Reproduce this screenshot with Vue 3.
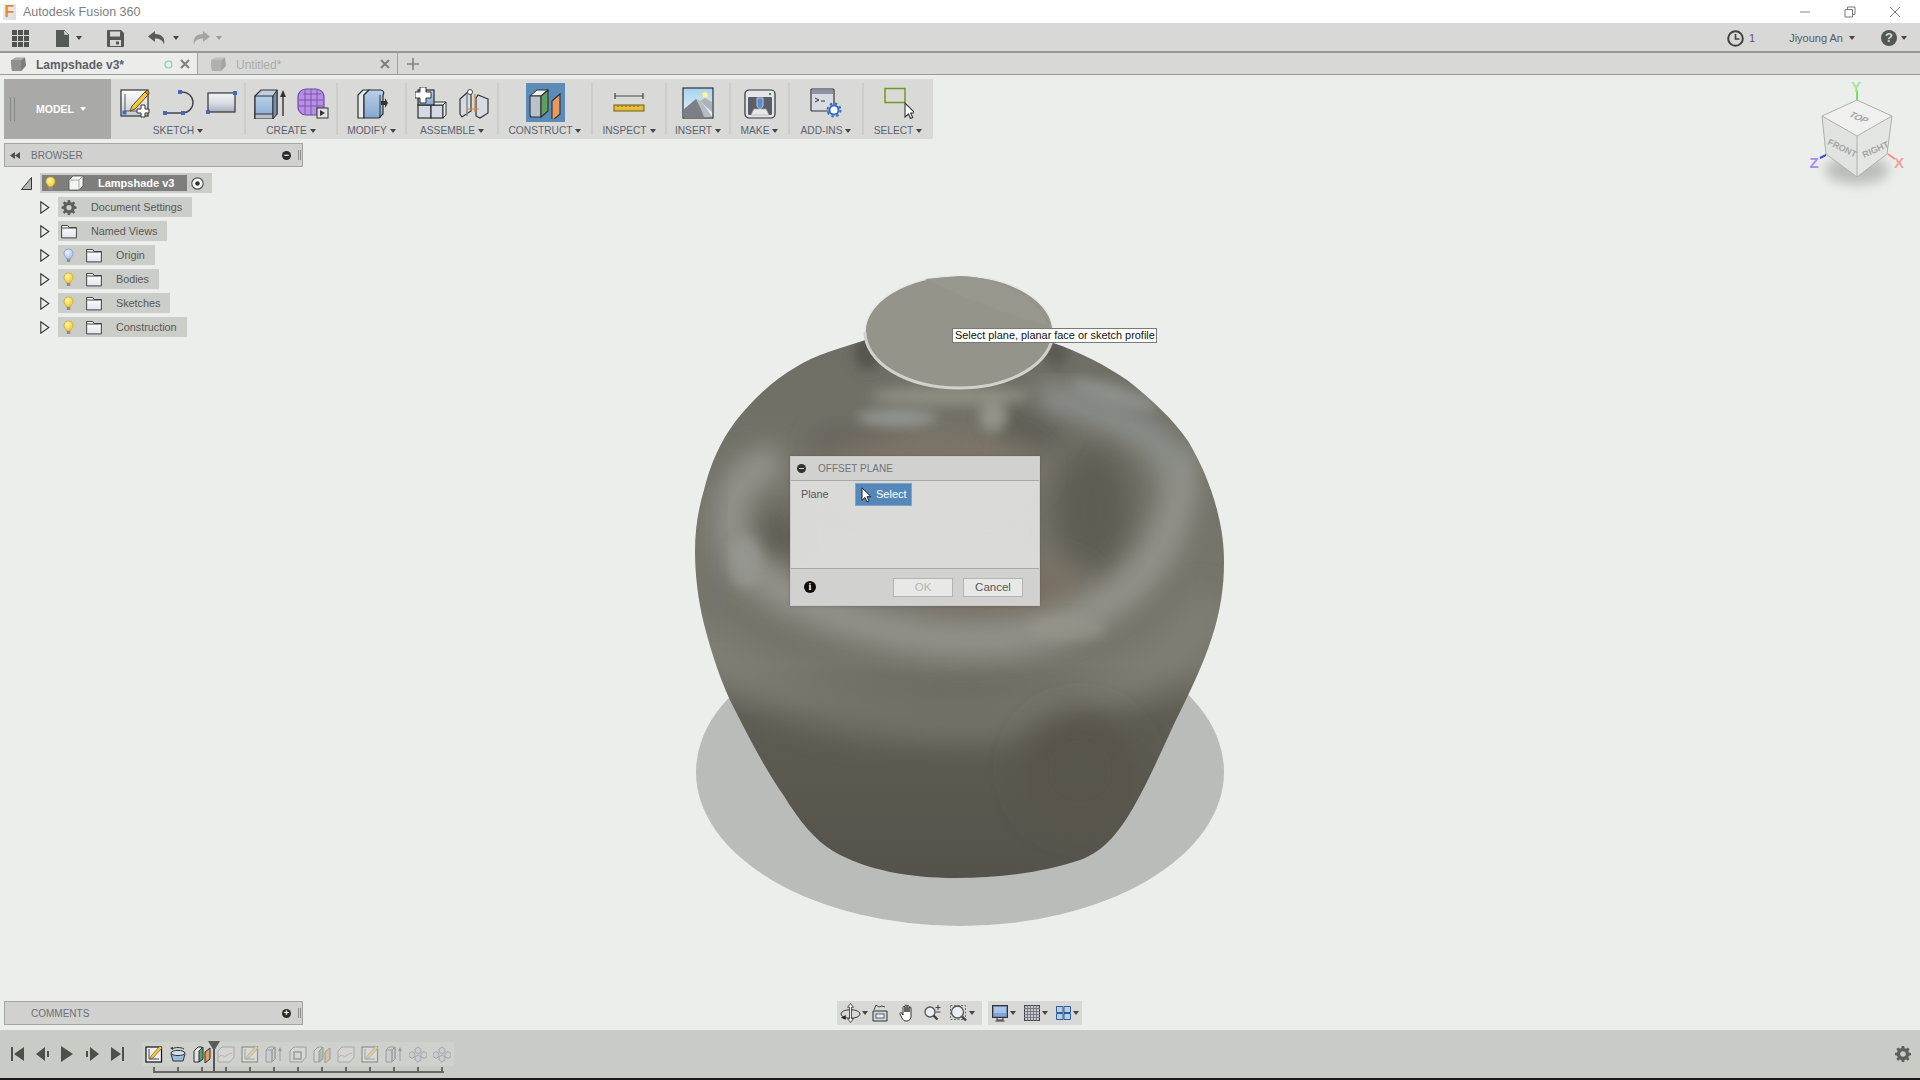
<script setup>
const ribbon = [
  { label: 'SKETCH', icons: ['i-sketch', 'i-arc', 'i-rect'] },
  { label: 'CREATE', icons: ['i-extrude', 'i-mesh'] },
  { label: 'MODIFY', icons: ['i-press'] },
  { label: 'ASSEMBLE', icons: ['i-comp', 'i-joint'] },
  { label: 'CONSTRUCT', icons: ['i-plane'], active: true },
  { label: 'INSPECT', icons: ['i-ruler'] },
  { label: 'INSERT', icons: ['i-picture'] },
  { label: 'MAKE', icons: ['i-printer'] },
  { label: 'ADD-INS', icons: ['i-addins'] },
  { label: 'SELECT', icons: ['i-select'] }
]
const rows = [
  { label: 'Document Settings', icon: 'i-gear' },
  { label: 'Named Views', icon: 'i-folder' },
  { label: 'Origin', bulb: 'i-bulb-blue', icon: 'i-folder' },
  { label: 'Bodies', bulb: 'i-bulb', icon: 'i-folder' },
  { label: 'Sketches', bulb: 'i-bulb', icon: 'i-folder' },
  { label: 'Construction', bulb: 'i-bulb', icon: 'i-folder' }
]
const timeline = [
  { icon: 't-sketch' }, { icon: 't-revolve' }, { icon: 't-plane' },
  { icon: 't-surface', faded: true }, { icon: 't-sketch', faded: true }, { icon: 't-extrude', faded: true },
  { icon: 't-shell', faded: true }, { icon: 't-plane', faded: true }, { icon: 't-surface', faded: true },
  { icon: 't-sketch', faded: true }, { icon: 't-extrude', faded: true }, { icon: 't-pattern', faded: true },
  { icon: 't-pattern', faded: true }
]
</script>

<template>
  <div class="app">
    <svg class="defs" width="0" height="0" aria-hidden="true">
      <defs>
        <linearGradient id="gPage" x1="0" y1="0" x2="0" y2="1"><stop offset="0" stop-color="#ffffff" /><stop offset="1" stop-color="#c4cad4" /></linearGradient>
        <linearGradient id="gBar" x1="0" y1="0" x2="0" y2="1"><stop offset="0" stop-color="#f4f5f7" /><stop offset=".55" stop-color="#d8dbe2" /><stop offset="1" stop-color="#a8adba" /></linearGradient>
        <linearGradient id="gBlue" x1="0" y1="0" x2="0" y2="1"><stop offset="0" stop-color="#b9d0e8" /><stop offset="1" stop-color="#86a8cf" /></linearGradient>
        <linearGradient id="gSky" x1="0" y1="0" x2="0" y2="1"><stop offset="0" stop-color="#a7d3ef" /><stop offset="1" stop-color="#e8f3f8" /></linearGradient>
        <radialGradient id="gBulb" cx=".4" cy=".35" r=".7"><stop offset="0" stop-color="#fff6a8" /><stop offset="1" stop-color="#f2c92a" /></radialGradient>
        <radialGradient id="gBulbB" cx=".4" cy=".35" r=".7"><stop offset="0" stop-color="#eef2fb" /><stop offset="1" stop-color="#a9bfe6" /></radialGradient>
        <linearGradient id="gFolder" x1="0" y1="0" x2="0" y2="1"><stop offset="0" stop-color="#ffffff" /><stop offset="1" stop-color="#dfe6ee" /></linearGradient>
        <symbol id="i-bulb" viewBox="0 0 12 16"><path d="M6 .8a5 5 0 0 1 3 9c-.6.5-.8 1-.8 1.7H3.800c0-.7-.2-1.200-.8-1.700a5 5 0 0 1 3-9z" fill="url(#gBulb)" stroke="#c9a227" stroke-width=".7" /><rect x="4" y="11.800" width="4" height="3.400" rx="1" fill="#8d8f96" /></symbol>
        <symbol id="i-bulb-blue" viewBox="0 0 12 16"><path d="M6 .8a5 5 0 0 1 3 9c-.6.5-.8 1-.8 1.700H3.800c0-.7-.2-1.200-.8-1.700a5 5 0 0 1 3-9z" fill="url(#gBulbB)" stroke="#7a93c6" stroke-width=".7" /><rect x="4" y="11.800" width="4" height="3.400" rx="1" fill="#8d8f96" /></symbol>
        <symbol id="i-folder" viewBox="0 0 16 14"><path d="M.6 1h6l1.500 2h7.300v10.400H.6z" fill="url(#gFolder)" stroke="#444" stroke-width="1" /><path d="M.6 3.500h14.800" stroke="#444" stroke-width="1" /></symbol>
        <symbol id="i-gear" viewBox="0 0 16 16"><path d="M6.800 0h2.400l.4 2.200 1.500.6 1.800-1.300 1.700 1.700-1.300 1.800.6 1.500 2.100.4v2.400l-2.100.4-.6 1.500 1.300 1.800-1.700 1.700-1.800-1.300-1.500.6-.4 2.100H6.800l-.4-2.100-1.500-.6-1.800 1.300-1.700-1.700 1.300-1.800-.6-1.500L0 9.200V6.800l2.100-.4.6-1.500-1.300-1.800 1.700-1.700 1.800 1.300 1.500-.6zM8 5.200a2.800 2.800 0 1 0 0 5.600 2.800 2.800 0 0 0 0-5.600z" fill="#5d5f5f" fill-rule="evenodd" /></symbol>
        <symbol id="i-cube" viewBox="0 0 18 16"><path d="M1 3.500L6 .8h10l1 8.500-5 5.700H2z" fill="#7a7b7a" /><path d="M1 3.500h11V15H2z" fill="#8f908f" /><path d="M1 3.500L6 .8h10l-4 2.700z" fill="#a9aaa9" /></symbol>
      </defs>
    </svg>

    <header class="titlebar">
      <span class="logo">F</span>
      <span class="title">Autodesk Fusion 360</span>
      <div class="winctl">
        <svg width="12" height="12" viewBox="0 0 12 12"><path d="M1 6h10" stroke="#888" stroke-width="1" /></svg>
        <svg width="12" height="12" viewBox="0 0 12 12"><path d="M1 3.500h7.500V11H1zM3.500 3.500V1H11v7.500H8.500" fill="none" stroke="#777" stroke-width="1" /></svg>
        <svg width="12" height="12" viewBox="0 0 12 12"><path d="M1 1l10 10M11 1L1 11" stroke="#777" stroke-width="1" /></svg>
      </div>
    </header>

    <div class="menubar">
      <svg class="m-grid" width="17" height="17" viewBox="0 0 17 17"><path d="M0 0h5v5H0zM6 0h5v5H6zM12 0h5v5h-5zM0 6h5v5H0zM6 6h5v5H6zM12 6h5v5h-5zM0 12h5v5H0zM6 12h5v5H6zM12 12h5v5h-5z" fill="#505250" /></svg>
      <svg class="m-doc" width="14" height="17" viewBox="0 0 14 17"><path d="M0 0h8l5 5v12H0z" fill="#575957" /><path d="M8 0l5 5H8z" fill="#d8d9d7" stroke="#575957" stroke-width=".5" /></svg>
      <i class="caret m-c1"></i>
      <svg class="m-save" width="17" height="17" viewBox="0 0 17 17"><path d="M0 1a1 1 0 0 1 1-1h13l3 3v13a1 1 0 0 1-1 1H1a1 1 0 0 1-1-1z" fill="#565856" /><rect x="3" y="1.500" width="10" height="5" fill="#d8d9d7" /><rect x="3" y="10" width="11" height="6" fill="#d8d9d7" /><rect x="9" y="11.500" width="3" height="3" fill="#565856" /></svg>
      <svg class="m-undo" width="18" height="14" viewBox="0 0 18 14"><path d="M7 0L0 5.500 7 11V7.500c4.500 0 7.500 1.200 9 6 1.500-7-2.500-10.500-9-10.500z" fill="#595b59" /></svg>
      <i class="caret m-c2"></i>
      <svg class="m-redo" width="18" height="14" viewBox="0 0 18 14"><path d="M11 0l7 5.500-7 5.500V7.500c-4.500 0-7.500 1.200-9 6C.5 6.500 4.500 3 11 3z" fill="#a2a5a3" /></svg>
      <i class="caret light m-c3"></i>
      <div class="m-right">
        <svg class="m-clock" width="17" height="17" viewBox="0 0 17 17"><circle cx="8.500" cy="8.500" r="7.300" fill="none" stroke="#404240" stroke-width="2" /><path d="M8.500 4v5h4" fill="none" stroke="#404240" stroke-width="1.600" /></svg>
        <span class="m-count">1</span>
        <span class="m-user">Jiyoung An</span>
        <i class="caret m-c4"></i>
        <span class="m-help">?</span>
        <i class="caret m-c5"></i>
      </div>
    </div>

    <div class="tabs">
      <div class="tab active">
        <svg class="t-cube" width="17" height="15"><use href="#i-cube" /></svg>
        <span class="t-name">Lampshade v3*</span>
        <svg class="t-ring" width="9" height="9" viewBox="0 0 9 9"><circle cx="4.500" cy="4.500" r="3.500" fill="none" stroke="#7fd1bb" stroke-width="1.200" /></svg>
        <svg class="t-x" width="10" height="10" viewBox="0 0 10 10"><path d="M1 1l8 8M9 1L1 9" stroke="#818381" stroke-width="2.200" /></svg>
      </div>
      <div class="tab">
        <svg class="t-cube dim" width="17" height="15"><use href="#i-cube" /></svg>
        <span class="t-name dimtext">Untitled*</span>
        <svg class="t-x" width="10" height="10" viewBox="0 0 10 10"><path d="M1 1l8 8M9 1L1 9" stroke="#818381" stroke-width="2.200" /></svg>
      </div>
      <svg class="t-plus" width="12" height="12" viewBox="0 0 12 12"><path d="M6 0v12M0 6h12" stroke="#808280" stroke-width="1.600" /></svg>
    </div>

    <main class="workspace">
      <svg class="scene" width="1920" height="955" viewBox="0 75 1920 955">
        <defs>
          <linearGradient id="vBody" gradientUnits="userSpaceOnUse" x1="0" y1="340" x2="0" y2="878">
            <stop offset="0" stop-color="#6f6e65" />
            <stop offset=".42" stop-color="#76756b" />
            <stop offset=".6" stop-color="#76756b" />
            <stop offset=".7" stop-color="#5f5d53" />
            <stop offset="1" stop-color="#54524a" />
          </linearGradient>
          <clipPath id="vClip"><path d="M866 340C840 348 815 355 796 367C770 382 750 403 735 422C720 442 710 465 704 490C698 510 695 530 695 551C695 575 698 600 704 624C712 655 722 685 735 710C750 740 767 772 784 796C800 822 815 840 833 851C865 870 910 878 955 878C1000 878 1045 872 1080 860C1105 851 1120 830 1133 808C1148 782 1162 750 1175 722C1190 692 1203 665 1212 637C1220 612 1224 588 1224 563C1224 545 1222 530 1218 514C1212 488 1201 463 1188 441C1172 418 1150 398 1127 380C1105 365 1080 352 1053 343L1050 320L870 320Z" /></clipPath>
          <filter id="b4" x="-50%" y="-80%" width="200%" height="260%"><feGaussianBlur stdDeviation="6" /></filter>
          <filter id="b9" x="-30%" y="-30%" width="160%" height="160%"><feGaussianBlur stdDeviation="12" /></filter>
          <filter id="b14" x="-40%" y="-40%" width="180%" height="180%"><feGaussianBlur stdDeviation="15" /></filter>
        </defs>
        <ellipse cx="960" cy="772" rx="264" ry="154" fill="#babcb9" />
        <g clip-path="url(#vClip)">
          <rect x="680" y="320" width="560" height="570" fill="url(#vBody)" />
          <path d="M690 630C735 690 850 720 958 720C1070 720 1170 680 1215 600" fill="none" stroke="#8a897f" stroke-width="46" opacity=".5" filter="url(#b14)" />
          <ellipse cx="1092" cy="510" rx="40" ry="66" fill="#5e5d53" filter="url(#b14)" />
          <ellipse cx="779" cy="537" rx="24" ry="26" fill="#5f5e55" filter="url(#b9)" />
          <ellipse cx="860" cy="442" rx="50" ry="16" fill="#63615a" filter="url(#b9)" />
          <ellipse cx="1030" cy="428" rx="36" ry="22" fill="#5e5d54" filter="url(#b9)" />
          <ellipse cx="930" cy="470" rx="110" ry="36" fill="#7f7568" filter="url(#b14)" />
          <ellipse cx="1000" cy="590" rx="90" ry="30" fill="#7a7063" filter="url(#b14)" />
          <path d="M1178 452C1188 500 1166 556 1125 590C1085 622 1030 640 974 640C900 640 820 615 772 585C735 560 722 530 732 500C742 478 752 466 780 462" fill="none" stroke="#93938b" stroke-width="34" filter="url(#b9)" />
          <ellipse cx="1066" cy="628" rx="40" ry="12" fill="#97948a" opacity=".7" filter="url(#b4)" />
          <ellipse cx="745" cy="562" rx="16" ry="26" fill="#9a9a94" opacity=".7" filter="url(#b4)" />
          <path d="M1040 396C1090 404 1150 422 1180 470" fill="none" stroke="#8c8f8b" stroke-width="30" filter="url(#b9)" />
          <ellipse cx="1115" cy="395" rx="46" ry="10" fill="#929591" opacity=".8" transform="rotate(16 1115 395)" filter="url(#b4)" />
          <ellipse cx="950" cy="396" rx="80" ry="10" fill="#8e8d82" filter="url(#b4)" />
          <ellipse cx="897" cy="418" rx="40" ry="9" fill="#9ba09c" opacity=".75" filter="url(#b4)" />
          <ellipse cx="993" cy="416" rx="14" ry="16" fill="#9e9d92" opacity=".8" filter="url(#b4)" />
          <path d="M722 480C708 520 708 580 724 625" fill="none" stroke="#74777a" stroke-width="10" opacity=".55" filter="url(#b9)" />
          <ellipse cx="868" cy="352" rx="14" ry="18" fill="#55554e" filter="url(#b4)" />
          <ellipse cx="1056" cy="352" rx="12" ry="16" fill="#5b5a52" filter="url(#b4)" />
          <ellipse cx="1080" cy="770" rx="60" ry="60" fill="#59544b" filter="url(#b14)" />
        </g>
        <ellipse cx="959" cy="332" rx="94" ry="56" fill="#94948b" stroke="#e6e7e3" stroke-width="1.500" />
        <path d="M865 332A94 56 0 0 0 1053 332" fill="none" stroke="#d1d2cd" stroke-width="3" />
        <path d="M925 279C970 300 1015 318 1048 325C1040 300 1000 276 959 276Z" fill="#98978d" />
      </svg>

      <svg class="cube" width="100" height="120" viewBox="1810 80 100 120">
        <defs><filter id="cb" x="-40%" y="-60%" width="180%" height="220%"><feGaussianBlur stdDeviation="6" /></filter></defs>
        <ellipse cx="1857" cy="172" rx="32" ry="14" fill="#bbbdba" filter="url(#cb)" />
        <path d="M1857 102L1892 118L1887 156L1857 179L1826 156L1822 118Z" fill="#eceeeb" />
        <path d="M1857 138L1892 118L1887 156L1857 179Z" fill="#e4e6e3" />
        <path d="M1822 118L1857 138V179L1826 156Z" fill="#e1e3e0" />
        <path d="M1857 102L1892 118L1857 138L1822 118Z" fill="#f0f1ef" stroke="#aeb0ad" />
        <path d="M1857 138V179M1822 118L1826 156L1857 179L1887 156L1892 118" fill="none" stroke="#aeb0ad" />
        <text class="cube-txt" transform="translate(1848 118) rotate(24) skewX(-24)">TOP</text>
        <text class="cube-txt" transform="translate(1827 146) rotate(26)">FRONT</text>
        <text class="cube-txt" transform="translate(1864 160) rotate(-24)">RIGHT</text>
        <path d="M1857 92V102" stroke="#6fe26f" stroke-width="2" />
        <path d="M1820 160L1826 157" stroke="#4a47d8" stroke-width="2" />
        <path d="M1888 156L1895 161" stroke="#f09090" stroke-width="2" />
        <text class="axis ay" x="1856" y="94">Y</text>
        <text class="axis az" x="1814" y="170">Z</text>
        <text class="axis ax" x="1899" y="170">X</text>
      </svg>

      <div class="tooltip">Select plane, planar face or sketch profile</div>

      <section class="dialog">
        <div class="d-head">
          <span class="minus"></span>
          <span class="d-title">OFFSET PLANE</span>
        </div>
        <div class="d-body">
          <span class="d-label">Plane</span>
          <span class="d-select">
            <svg width="11" height="16" viewBox="0 0 11 16"><path d="M1 .8v12.500l3-2.800 2 4.400 2-1-2-4.200h4z" fill="#fff" stroke="#222" stroke-width="1" /></svg>
            Select
          </span>
        </div>
        <div class="d-foot">
          <span class="info">i</span>
          <button class="btn off">OK</button>
          <button class="btn">Cancel</button>
        </div>
      </section>

      <div class="stack">
        <div class="ribbon">
          <div class="model"><span class="grip"></span><span class="m-label">MODEL</span><i class="caret white"></i></div>
          <div v-for="g in ribbon" :key="g.label" class="group">
            <div class="g-icons" :class="{ hi: g.active }">
              <svg v-for="ic in g.icons" :key="ic" class="ric" width="32" height="32" viewBox="0 0 32 32">
                <template v-if="ic === 'i-sketch'">
                  <rect x="2" y="3" width="27" height="26" fill="url(#gPage)" stroke="#333" stroke-width="1.200" />
                  <path d="M6 7v17h17" fill="none" stroke="#555" stroke-width="1" />
                  <rect x="3.500" y="23.500" width="4" height="4" fill="#3a6cc4" />
                  <path d="M13 19l-2 5 5-2L29 8l-3-3z" fill="#f5c93a" stroke="#5a4a20" stroke-width="1" />
                  <path d="M26 5l3 3 1.500-2-2.500-3z" fill="#e07b3a" stroke="#5a4a20" stroke-width=".8" />
                  <path d="M22 18h4v4h4v4h-4v4h-4v-4h-4v-4h4z" fill="#fff" stroke="#333" stroke-width="1" />
                </template>
                <template v-else-if="ic === 'i-arc'">
                  <path d="M3 26h18M18 5h2a10.500 10.500 0 0 1 1 21" fill="none" stroke="#444" stroke-width="1.400" />
                  <rect x="1" y="24" width="4" height="4" fill="#3a6cc4" /><rect x="19" y="24" width="4" height="4" fill="#3a6cc4" /><rect x="16" y="3" width="4" height="4" fill="#3a6cc4" />
                </template>
                <template v-else-if="ic === 'i-rect'">
                  <rect x="3" y="6" width="27" height="19" fill="url(#gBar)" stroke="#333" stroke-width="1.200" />
                  <rect x="28" y="4" width="4" height="4" fill="#3a6cc4" /><rect x="1" y="23" width="4" height="4" fill="#3a6cc4" />
                </template>
                <template v-else-if="ic === 'i-extrude'">
                  <path d="M1 9l6-6h16v24l-6 5H1z" fill="#c3cede" stroke="#2f3136" stroke-width="1.200" />
                  <path d="M1 9h18v23H1z" fill="url(#gBlue)" stroke="#2f3136" stroke-width="1.200" />
                  <path d="M1 27h18v5H1z" fill="#b9bfc8" stroke="#2f3136" stroke-width="1" />
                  <path d="M19 9l4-6v24l-4 5z" fill="#7d90ab" stroke="#2f3136" stroke-width="1" />
                  <path d="M29 29V8" stroke="#333" stroke-width="1.400" /><path d="M29 3l-3 7h6z" fill="#333" />
                </template>
                <template v-else-if="ic === 'i-mesh'">
                  <rect x="1" y="2" width="26" height="26" rx="8" fill="#b98fe6" stroke="#6b4aa0" stroke-width="1.200" />
                  <path d="M6 7h18M2 13h24M2 19h24M8 3v24M14 2v26M20 3v24" stroke="#7a55b0" stroke-width="1" fill="none" />
                  <rect x="20" y="21" width="11" height="10" fill="#dfe1e3" stroke="#333" stroke-width="1" />
                  <path d="M23 23l5 3-5 3z" fill="#333" />
                </template>
                <template v-else-if="ic === 'i-press'">
                  <path d="M2 8l5-5h6l-5 5v23H2z" fill="#e8eaee" stroke="#2c2e33" stroke-width="1.200" />
                  <path d="M8 8l5-5h12a3 3 0 0 1 2 5v19l-4 4H8z" fill="url(#gBlue)" stroke="#2c2e33" stroke-width="1.200" />
                  <path d="M24 8v23" stroke="#2c2e33" stroke-width="1" />
                  <path d="M25 14h4v-3l3 5-3 5v-3h-4z" fill="#333" />
                </template>
                <template v-else-if="ic === 'i-comp'">
                  <rect x="3" y="18" width="13" height="13" fill="#d6dbe3" stroke="#2c2e33" stroke-width="1.200" />
                  <rect x="16" y="18" width="12" height="13" fill="#d6dbe3" stroke="#2c2e33" stroke-width="1.200" />
                  <path d="M28 18l3-3v13l-3 3zM16 18l3-3h12l-3 3z" fill="#eceef1" stroke="#2c2e33" stroke-width="1" />
                  <rect x="3" y="3" width="16" height="15" fill="url(#gBlue)" stroke="#2c2e33" stroke-width="1.200" />
                  <path d="M5 0h6v5h5v6h-5v5H5v-5H0V5h5z" fill="#fff" stroke="#333" stroke-width="1" />
                </template>
                <template v-else-if="ic === 'i-joint'">
                  <path d="M2 12l9-8 2 4v16l-9 6-2-3z" fill="#d8dbe1" stroke="#33353a" stroke-width="1.200" />
                  <path d="M30 12l-10-4-2 3v18l4 2 8-5z" fill="#d8dbe1" stroke="#33353a" stroke-width="1.200" />
                  <path d="M9 7v22" stroke="#888" stroke-width="1.500" />
                  <circle cx="12" cy="5" r="2.500" fill="#fff" stroke="#444" />
                  <path d="M17 7v18" stroke="#d38440" stroke-width="1.400" /><path d="M9 22h12" stroke="#d38440" stroke-width="1" />
                </template>
                <template v-else-if="ic === 'i-plane'">
                  <path d="M1 9l7-6h11l-7 6z" fill="#f2f3f5" stroke="#2c2e33" stroke-width="1" />
                  <path d="M1 9h11v21H3a2 2 0 0 1-2-2z" fill="#bcc2cc" stroke="#2c2e33" stroke-width="1.100" />
                  <path d="M12 9l7-6v21l-7 6z" fill="#5fa05a" stroke="#2c2e33" stroke-width="1.100" />
                  <path d="M23 14l8-7v20l-8 7z" fill="#e89a62" stroke="#2c2e33" stroke-width="1.100" />
                </template>
                <template v-else-if="ic === 'i-ruler'">
                  <path d="M2 9h28M2 6v6M30 6v6" stroke="#454545" stroke-width="1.200" fill="none" />
                  <rect x="1" y="18" width="30" height="6" fill="#e8bd37" stroke="#6c5a1d" stroke-width="1" />
                  <path d="M5 18v2M9 18v2M13 18v2M17 18v2M21 18v2M25 18v2" stroke="#6c5a1d" stroke-width="1" />
                </template>
                <template v-else-if="ic === 'i-picture'">
                  <rect x="1" y="1" width="30" height="30" fill="url(#gSky)" stroke="#2f3136" stroke-width="1.200" />
                  <circle cx="23" cy="8" r="3" fill="#fff3b0" stroke="#f4df8d" />
                  <path d="M2 30V22l12-10c6 3 10 10 16 18z" fill="#7c7f87" />
                  <path d="M18 14l5-3 7 4v10z" fill="#aeb2b7" /><path d="M14 12c7 3 10 10 16 18h-8c-2-6-5-12-8-18z" fill="#b9bcc1" />
                </template>
                <template v-else-if="ic === 'i-printer'">
                  <rect x="1" y="3" width="30" height="28" rx="4" fill="#e3e5e8" stroke="#2f3136" stroke-width="1.200" />
                  <rect x="4" y="10" width="24" height="18" rx="1" fill="#5a5e67" />
                  <rect x="25" y="6" width="2" height="2" fill="#2a9a3a" />
                  <path d="M13 11h6v8l-3 4-3-4z" fill="#5b88d0" stroke="#dfe1e4" stroke-width=".8" />
                  <path d="M7 28l3-6h12l3 6z" fill="#e6e7e8" stroke="#aaa" stroke-width=".6" />
                </template>
                <template v-else-if="ic === 'i-addins'">
                  <rect x="1" y="2" width="23" height="22" rx="1" fill="#d9dbe3" stroke="#33353a" stroke-width="1.200" />
                  <rect x="2" y="3" width="21" height="4" fill="#8f93a1" />
                  <path d="M5 11l4 2-4 2M11 14h4" stroke="#333" fill="none" />
                  <circle cx="24" cy="23" r="4.500" fill="#fff" stroke="#3a6cc4" stroke-width="2" />
                  <circle cx="24" cy="23" r="6.500" fill="none" stroke="#3a6cc4" stroke-width="2" stroke-dasharray="2.500 2.600" />
                </template>
                <template v-else-if="ic === 'i-select'">
                  <rect x="3" y="1.500" width="20" height="14" fill="none" stroke="#6c9b1f" stroke-width="1.500" />
                  <path d="M23 16v14l3.500-3 2 4.500 2.200-1-2-4.500H33z" fill="#fff" stroke="#333" stroke-width="1.100" />
                </template>
              </svg>
            </div>
            <div class="g-label">{{ g.label }}<i class="caret"></i></div>
          </div>
        </div>

        <div class="panel browser">
          <svg class="rewind" width="10" height="7" viewBox="0 0 10 7"><path d="M5 0v7L0 3.500zM10 0v7L5 3.500z" fill="#4c4e4c" /></svg>
          <span class="p-title">BROWSER</span>
          <span class="round">−</span>
          <span class="p-grip"></span>
        </div>

        <div class="tree">
          <div class="row root">
            <svg class="arrow" width="11" height="13" viewBox="0 0 11 13"><path d="M10.500 .5v12H.5z" fill="#b5b7b4" stroke="#333" /></svg>
            <div class="chip rootchip">
              <div class="rootdark">
                <svg class="rb" width="11" height="15"><use href="#i-bulb" /></svg>
                <svg class="rc" width="16" height="16" viewBox="0 0 16 16"><path d="M1 5l4-4h10v10l-4 4H1z" fill="#f3f4f4" stroke="#555" stroke-width=".8" /><path d="M1 5h10l4-4M11 5v10" fill="none" stroke="#888" stroke-width=".7" /></svg>
                <span class="rname">Lampshade v3</span>
              </div>
              <svg class="radio" width="13" height="13" viewBox="0 0 13 13"><circle cx="6.500" cy="6.500" r="5.700" fill="#fff" stroke="#555" stroke-width="1.200" /><circle cx="6.500" cy="6.500" r="2.300" fill="#333" /></svg>
            </div>
          </div>
          <div v-for="r in rows" :key="r.label" class="row">
            <svg class="arrow small" width="10" height="13" viewBox="0 0 10 13"><path d="M.8 .8l8 5.700-8 5.700z" fill="#eceeec" stroke="#333" stroke-width="1.100" /></svg>
            <div class="chip">
              <span v-if="r.bulb" class="slot"><svg class="bulb" width="11" height="15"><use :href="'#' + r.bulb" /></svg></span>
              <span class="slot"><svg width="16" height="15"><use :href="'#' + r.icon" /></svg></span>
              <span class="c-text">{{ r.label }}</span>
            </div>
          </div>
        </div>

        <div class="bottom">
          <div class="panel comments">
            <span class="p-title">COMMENTS</span>
            <span class="round">+</span>
            <span class="p-grip"></span>
          </div>
          <div class="nav">
            <svg class="n1" width="21" height="20" viewBox="0 0 22 20"><ellipse cx="11" cy="11" rx="10" ry="4.500" fill="none" stroke="#333" stroke-width="1" /><path d="M11 0l-3 4h2v12H8l3 4 3-4h-2V4h2z" fill="#fff" stroke="#333" stroke-width=".9" /><path d="M1 15l5-3v5z" fill="#222" /></svg>
            <i class="caret c-n1"></i>
            <svg class="n2" width="16" height="18" viewBox="0 0 16 18"><path d="M1 7h14v10H1z" fill="#cfd3d9" stroke="#333" /><rect x="4" y="10" width="8" height="4" fill="#eceef0" stroke="#444" stroke-width=".8" /><path d="M2 6l2-5 3 2 3-1 3 1" fill="none" stroke="#444" /></svg>
            <svg class="n3" width="16" height="18" viewBox="0 0 16 18"><path d="M4 11V3.500a1 1 0 0 1 2 0V8V2a1 1 0 0 1 2 0v6V2.500a1 1 0 0 1 2 0V8V4a1 1 0 0 1 2 0v8c0 3-1.500 5-4.500 5-2.500 0-3.500-1-4.500-3L1 10c-.5-1 .8-2 1.800-1z" fill="#fff" stroke="#333" stroke-width="1" /></svg>
            <svg class="n4" width="17" height="18" viewBox="0 0 17 18"><circle cx="6" cy="8" r="5" fill="#e8eef2" stroke="#555" stroke-width="1.300" /><path d="M9.500 11.500l4 4" stroke="#444" stroke-width="2.400" /><path d="M14 1v5M11.500 3.500h5M11.500 8h5" stroke="#444" stroke-width="1" /></svg>
            <svg class="n5" width="17" height="18" viewBox="0 0 17 18"><rect x=".5" y="1.500" width="15" height="14" fill="none" stroke="#555" stroke-dasharray="2 1.500" stroke-width=".8" /><circle cx="7.500" cy="8" r="6" fill="#e8eef2" stroke="#555" stroke-width="1.300" /><path d="M12 12.500l4 4" stroke="#444" stroke-width="2.400" /></svg>
            <i class="caret"></i>
          </div>
          <div class="nav second">
            <svg class="n6" width="16" height="17" viewBox="0 0 16 17"><rect x=".6" y=".6" width="14.800" height="11.800" fill="#7fa4d6" stroke="#333" stroke-width="1.200" /><rect x="2" y="2" width="12" height="6" fill="#a9c5e6" /><path d="M5 13v2h6v-2M3.500 16h9" stroke="#333" stroke-width="1" fill="none" /></svg>
            <i class="caret"></i>
            <svg class="n7" width="16" height="16" viewBox="0 0 16 16"><rect x=".5" y=".5" width="15" height="15" fill="#c4c5cc" stroke="#444" /><path d="M3.500 0v16M6.500 0v16M9.500 0v16M12.500 0v16M0 3.500h16M0 6.500h16M0 9.500h16M0 12.500h16" stroke="#6e6f78" stroke-width=".8" /></svg>
            <i class="caret"></i>
            <svg class="n8" width="15" height="14" viewBox="0 0 15 14"><path d="M.5.5h6.500v6H.5zM8 .5h6.500v6H8zM.5 7.500h6.500v6H.5zM8 7.500h6.500v6H8z" fill="#b9cfe6" stroke="#2f5c96" stroke-width="1" /></svg>
            <i class="caret"></i>
          </div>
        </div>
      </div>
    </main>

    <footer class="timebar">
      <div class="transport">
        <svg width="13" height="14" viewBox="0 0 13 14"><path d="M0 0h2v14H0zM13 0v14L3 7z" fill="#4d4f4d" /></svg>
        <svg width="13" height="14" viewBox="0 0 13 14"><path d="M9 0v14L0 7zM11 4h2v6h-2z" fill="#4d4f4d" /></svg>
        <svg width="13" height="16" viewBox="0 0 13 16"><path d="M0 0l12 8-12 8z" fill="#4d4f4d" /></svg>
        <svg width="13" height="14" viewBox="0 0 13 14"><path d="M4 0v14l9-7zM0 4h2v6H0z" fill="#4d4f4d" /></svg>
        <svg width="13" height="14" viewBox="0 0 13 14"><path d="M11 0h2v14h-2zM0 0v14l10-7z" fill="#4d4f4d" /></svg>
      </div>
      <div class="tl">
        <div v-for="(t, i) in timeline" :key="i" class="tl-item" :class="{ faded: t.faded }">
          <svg width="18" height="17" viewBox="0 0 18 17">
            <template v-if="t.icon === 't-sketch'">
              <rect x="1" y="1" width="15.500" height="15" fill="#eef0f3" stroke="#111" stroke-width="1.200" />
              <path d="M4 3v10h10" fill="none" stroke="#444" /><path d="M6 10l-1 3 3-1 9-10-2-2z" fill="#f3c736" stroke="#5a4a20" stroke-width=".6" />
            </template>
            <template v-else-if="t.icon === 't-revolve'">
              <path d="M2 8c0-2 14-2 14 0l-2 7H4z" fill="#9dbde0" stroke="#333" /><ellipse cx="9" cy="7" rx="7" ry="2.600" fill="#cfe0f0" stroke="#333" />
              <path d="M3 3c3-2 9-2 12 0" fill="none" stroke="#333" /><path d="M1 2l3-1v3z" fill="#333" />
            </template>
            <template v-else-if="t.icon === 't-plane'">
              <path d="M1 5l4-4h4v12l-3 3H1z" fill="#dfe3e8" stroke="#2c2e33" /><path d="M6 5l4-4v12l-4 3z" fill="#5fa05a" stroke="#2c2e33" /><path d="M12 6l5-4v11l-5 4z" fill="#e89a62" stroke="#2c2e33" />
            </template>
            <template v-else-if="t.icon === 't-surface'">
              <path d="M1 5l4-4h12v10l-4 5H1z" fill="#dde1e6" stroke="#555" /><path d="M2 11c3-4 5 1 7-1s3-2 6-3" fill="none" stroke="#d04a3a" />
            </template>
            <template v-else-if="t.icon === 't-extrude'">
              <path d="M1 4l3-3h6v12l-3 3H1z" fill="#b9cde4" stroke="#333" /><path d="M7 4l3-3v12l-3 3zM1 4h6v12" fill="none" stroke="#333" /><path d="M15 15V5" stroke="#333" /><path d="M15 1l-2 4h4z" fill="#333" />
            </template>
            <template v-else-if="t.icon === 't-shell'">
              <path d="M1 5l4-4h12v10l-4 5H1z" fill="#dde1e6" stroke="#333" /><rect x="5" y="6" width="7" height="7" fill="none" stroke="#333" stroke-width="1.500" />
            </template>
            <template v-else>
              <path d="M9 1l3 2v3l-3 2-3-2V3zM3 5.500l3 2v3l-3 2-3-2v-3zM15 5.500l3 2v3l-3 2-3-2v-3zM9 9l3 2v3l-3 2-3-2v-3z" fill="#b4c8e2" stroke="#333" stroke-width=".8" />
            </template>
          </svg>
          <span class="tick"></span>
        </div>
        <span class="marker"></span>
      </div>
      <svg class="tb-gear" width="16" height="16"><use href="#i-gear" /></svg>
    </footer>
    <div class="blackbar"></div>
  </div>
</template>

<style scoped>
* { box-sizing: border-box; }
.app { width: 1920px; height: 1080px; display: flex; flex-direction: column; overflow: hidden; font-family: "Liberation Sans", Arial, sans-serif; background: #eceeec; }
.defs { position: absolute; }
.titlebar { height: 23px; background: #fff; display: flex; align-items: center; padding-left: 3px; flex: none; }
.logo { width: 13px; height: 16px; margin-right: 7px; background: linear-gradient(135deg, #f2f2f2, #d7dde2); color: #e8892c; font: bold 16px/16px "Liberation Sans", Arial, sans-serif; text-align: center; }
.title { font-size: 12.5px; color: #7d7f80; }
.winctl { margin-left: auto; display: flex; gap: 33px; padding-right: 19px; }
.menubar { height: 30px; background: #d8d9d7; border-bottom: 2px solid #979896; display: flex; align-items: center; padding: 2px 0 0 12px; flex: none; }
.caret { display: inline-block; width: 0; height: 0; border-left: 3.500px solid transparent; border-right: 3.500px solid transparent; border-top: 4.500px solid #444; margin-left: 3px; vertical-align: middle; }
.caret.light { border-top-color: #9b9d9b; }
.caret.white { border-top-color: #fff; margin-left: 6px; }
.m-doc { margin-left: 27px; }
.m-c1 { margin-left: 6px; }
.m-save { margin-left: 25px; }
.m-undo { margin-left: 24px; }
.m-c2 { margin-left: 7px; }
.m-redo { margin-left: 13px; }
.m-c3 { margin-left: 6px; }
.m-right { margin-left: auto; display: flex; align-items: center; padding-right: 13px; }
.m-count { font-size: 11px; color: #6a4a8c; margin-left: 5px; }
.m-user { font-size: 11px; color: #555a66; margin-left: 34px; }
.m-c4 { margin-left: 6px; }
.m-help { width: 16px; height: 16px; border-radius: 50%; background: #555755; color: #d8d9d7; font: bold 13px/16px "Liberation Sans", Arial, sans-serif; text-align: center; margin-left: 26px; }
.m-c5 { margin-left: 4px; }
.tabs { height: 22px; background: #d8d9d7; border-bottom: 1px solid #9a9b99; display: flex; align-items: center; flex: none; }
.tab { width: 198px; height: 21px; margin-right: 2px; display: flex; align-items: center; position: relative; padding: 2px 0 0 10px; border-right: 1px solid #a2a3a1; flex: none; }
.tab.active { background: #ecedeb; }
.t-name { font-size: 12px; font-weight: bold; color: #5c5f66; margin-left: 9px; }
.t-name.dimtext { color: #a9abaa; font-weight: normal; }
.t-cube.dim { opacity: .55; }
.t-ring { position: absolute; left: 164px; top: 7px; }
.t-x { position: absolute; right: 7px; top: 6px; }
.t-plus { margin-left: 7px; }
.workspace { flex: 1; position: relative; min-height: 0; }
.scene { position: absolute; left: 0; top: 0; }
.cube { position: absolute; left: 1810px; top: 3px; overflow: visible; }
.cube-txt { font: bold 9px "Liberation Sans", Arial, sans-serif; fill: #a4a6a3; }
.axis { font: bold 15px "Liberation Sans", Arial, sans-serif; text-anchor: middle; }
.ay { fill: #9ce89c; }
.az { fill: #a88cf0; }
.ax { fill: #f2a0a0; }
.tooltip { position: absolute; left: 952px; top: 253px; height: 15px; width: 205px; background: #fff; border: 1px solid #77797a; color: #111; font-size: 10.900px; line-height: 13px; padding-left: 2px; white-space: nowrap; }
.dialog { position: absolute; left: 790px; top: 381px; width: 250px; height: 150px; background: rgba(222, 223, 221, .96); border: 1px solid #c9cac7; box-shadow: 0 0 3px rgba(60, 60, 60, .35); display: flex; flex-direction: column; }
.d-head { height: 24px; background: #d1d2d0; border-bottom: 1px solid #a8a9a7; display: flex; align-items: center; padding-left: 6px; flex: none; }
.minus { width: 9px; height: 9px; border-radius: 50%; background: #333; position: relative; }
.minus::after { content: ""; position: absolute; left: 2px; top: 4px; width: 5px; height: 1px; background: #d1d2d0; }
.d-title { margin-left: 12px; font-size: 10px; color: #70727a; }
.d-body { flex: 1; display: flex; align-items: flex-start; padding: 2px 0 0 10px; }
.d-label { font-size: 10.800px; color: #555; line-height: 23px; width: 54px; }
.d-select { width: 57px; height: 23px; background: #5588b8; border: 1px solid #7aa5cc; color: #fff; font-size: 11px; line-height: 21px; display: flex; align-items: center; gap: 4px; padding-left: 5px; }
.d-foot { height: 37px; flex: none; background: #d1d2d0; border-top: 1px solid #a8a9a7; display: flex; align-items: center; padding: 0 16px 0 13px; }
.info { width: 12px; height: 12px; border-radius: 50%; background: #0c0c0c; color: #fff; font: bold 10px/12px "Liberation Serif", serif; text-align: center; }
.btn { width: 60px; height: 19px; padding: 0; background: #e8e9e7; border: 1px solid #b3b4b2; font: 11.500px "Liberation Sans", Arial, sans-serif; color: #555; }
.btn.off { margin-left: auto; margin-right: 10px; color: #b4b5b3; }
.stack { position: relative; height: 100%; display: flex; flex-direction: column; padding: 4px 0 5px 4px; }
.ribbon { width: 929px; height: 60px; background: #d9dad8; display: grid; grid-template-columns: 107px 134px 92px 69px 92px 94px 74px 64px 59px 74px 70px; flex: none; }
.model { background: #a9aaa7; color: #fff; display: flex; align-items: center; justify-content: center; font-size: 10.500px; font-weight: bold; position: relative; padding-left: 7px; }
.grip { position: absolute; left: 6px; top: 18px; bottom: 18px; width: 5px; border-left: 1px solid #888a87; border-right: 1px solid #888a87; }
.group { position: relative; padding-top: 4px; display: flex; flex-direction: column; align-items: center; }
.group::before { content: ""; position: absolute; left: -1px; top: 4px; bottom: 4px; width: 2px; background: #cdcecc; }
.model + .group::before { display: none; }
.g-icons { height: 39px; display: flex; align-items: center; gap: 11px; padding: 0 4px; }
.g-icons.hi { background: #5b8cb8; width: 39px; justify-content: center; padding: 0; }
.ric { flex: none; }
.g-label { margin-top: 1px; font-size: 10.200px; line-height: 15px; color: #5a5f70; white-space: nowrap; }
.panel { width: 299px; height: 24px; background: #d1d2cf; border: 1px solid #a5a6a4; display: flex; align-items: center; padding-left: 5px; flex: none; }
.browser { margin-top: 4px; }
.rewind { margin-right: 11px; }
.p-title { font-size: 10px; color: #6a6e78; }
.comments .p-title { margin-left: 21px; }
.round { margin-left: auto; width: 9px; height: 9px; border-radius: 50%; background: #2b2b2b; color: #fff; font: bold 9px/9px "Liberation Sans", Arial, sans-serif; text-align: center; }
.p-grip { width: 3px; height: 10px; margin: 0 1px 0 7px; border-left: 1px solid #8c8d8b; border-right: 1px solid #8c8d8b; }
.tree { margin-top: 6px; display: flex; flex-direction: column; gap: 4px; }
.row { height: 20px; display: flex; align-items: center; margin-left: 36px; }
.row.root { margin-left: 17px; }
.arrow { margin-right: 8px; flex: none; }
.chip { height: 20px; background: #cbcdc9; display: flex; align-items: center; padding-right: 10px; font-size: 10.800px; color: #555856; }
.slot { width: 25px; padding-left: 3px; display: flex; align-items: center; }
.bulb { margin-left: 2px; }
.c-text { margin-left: 8px; white-space: nowrap; }
.rootchip { width: 172px; padding: 0; }
.rootdark { width: 145px; height: 16px; margin-left: 2px; background: #7e7f7c; display: flex; align-items: center; padding-left: 3px; }
.rc { margin-left: 12px; }
.rname { margin-left: 14px; color: #fff; font-weight: bold; font-size: 11px; white-space: nowrap; }
.radio { margin-left: 4px; }
.bottom { margin-top: auto; display: flex; align-items: flex-start; }
.nav { height: 24px; margin-left: 534px; background: #d8d9d6; display: flex; align-items: center; padding-left: 3px; width: 145px; flex: none; }
.nav .caret { margin-left: 2px; }
.nav .c-n1 { margin-left: 1px; }
.n2 { margin-left: 4px; }
.n3 { margin-left: 11px; }
.n4 { margin-left: 9px; }
.n5 { margin-left: 9px; }
.nav.second { margin-left: 6px; width: 94px; padding-left: 4px; }
.n7, .n8 { margin-left: 8px; }
.timebar { height: 48px; background: #c9cbc7; display: flex; align-items: flex-start; position: relative; flex: none; }
.transport { width: 142px; height: 48px; display: flex; align-items: center; gap: 12px; padding-left: 11px; flex: none; }
.tl { position: relative; display: flex; padding-top: 16px; height: 43px; background: linear-gradient(#cfd1cd, #cfd1cd) no-repeat 0 12px / 312px 24px; }
.tl::after { content: ""; position: absolute; left: 12px; right: 10px; bottom: 0; height: 2px; background: #666864; }
.tl-item { width: 24px; display: flex; flex-direction: column; align-items: center; position: relative; height: 27px; }
.tl-item.faded svg { opacity: .32; }
.tick { position: absolute; left: 11px; bottom: 0; width: 2px; height: 6px; background: #666864; }
.marker { position: absolute; left: 71px; top: 11px; width: 2px; height: 32px; background: #555752; }
.marker::before { content: ""; position: absolute; left: -5px; top: 0; border-left: 6px solid transparent; border-right: 6px solid transparent; border-top: 10px solid #5a5c58; }
.tb-gear { position: absolute; right: 9px; top: 16px; }
.blackbar { height: 2px; background: #1a1a1a; flex: none; }
</style>

<style>
html, body { margin: 0; padding: 0; background: #eceeec; overflow: hidden; }
</style>
